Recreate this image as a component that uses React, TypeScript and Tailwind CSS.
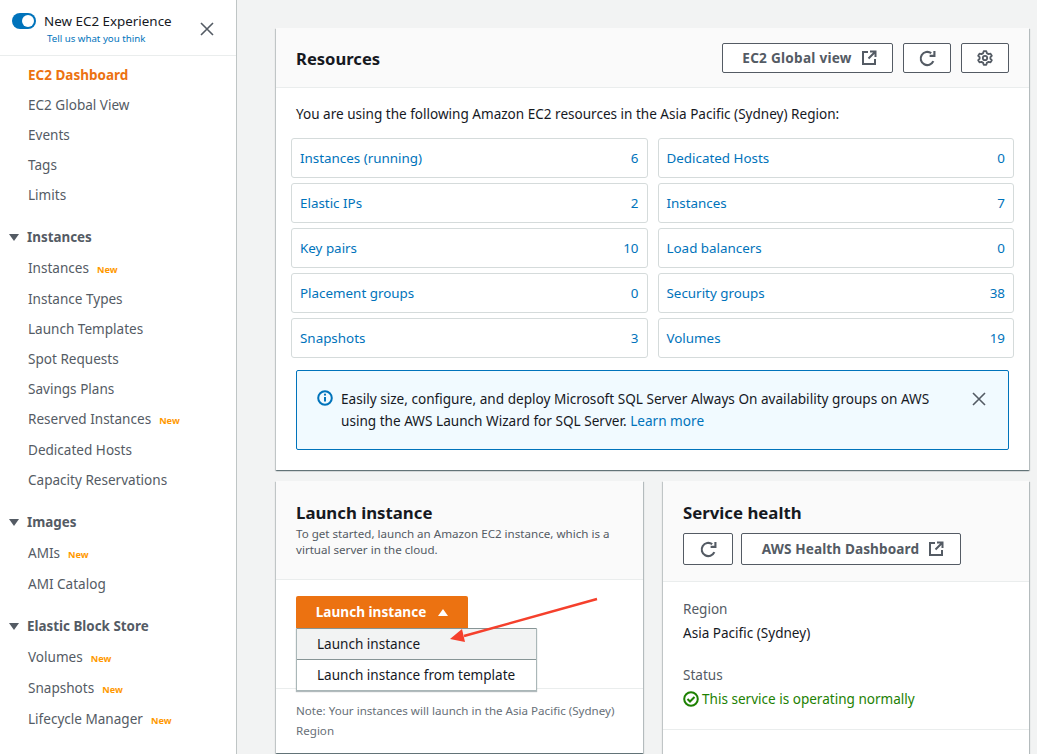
const font = "font-['Noto_Sans',sans-serif]";

type NavItem = { label: string; isNew?: boolean; h?: string };

function ExternalIcon() {
  return (
    <svg width="16" height="16" viewBox="0 0 16 16" fill="none" stroke="currentColor" strokeWidth="2">
      <path d="M7 2H2v12h12V9" />
      <path d="M9 1.5h5.5V7M14.5 1.5L7.5 8.5" />
    </svg>
  );
}

function RefreshIcon() {
  return (
    <svg width="17" height="17" viewBox="0 0 16 16" fill="none" stroke="currentColor" strokeWidth="2">
      <path d="M13.5 10.5A6.2 6.2 0 1 1 11.5 3" />
      <path d="M14.5 1v4.5H10" />
    </svg>
  );
}

function GearIcon() {
  return (
    <svg width="16" height="16" viewBox="0 0 16 16" fill="none" stroke="currentColor" strokeWidth="1.8">
      <circle cx="8" cy="8" r="2.2" />
      <path d="M6.7 1.2h2.6l.5 1.9 1.8 1 1.9-.5 1.3 2.2-1.4 1.4v1.6l1.4 1.4-1.3 2.2-1.9-.5-1.8 1-.5 1.9H6.7l-.5-1.9-1.8-1-1.9.5L1.2 10.2l1.4-1.4V7.2L1.2 5.8l1.3-2.2 1.9.5 1.8-1z" strokeLinejoin="round" />
    </svg>
  );
}

function NavSection({ title, items, className }: { title: string; items: NavItem[]; className: string }) {
  return (
    <div className={className}>
      <div className="h-[31px] flex items-center pl-[9px] text-[#545b64] font-bold text-[13.4px]">
        <span className="w-0 h-0 border-x-[5px] border-x-transparent border-t-[7px] border-t-[#545b64] mr-[8px]"></span>
        {title}
      </div>
      {items.map((item, idx) => (
        <div key={idx} className={`${item.h ?? "h-[30px]"} flex items-center pl-[28px] text-[13.55px] text-[#545b64]`}>
          {item.label}
          {item.isNew && <span className="ml-2 mt-[2px] text-[9.2px] font-bold text-[#ff9900]">New</span>}
        </div>
      ))}
    </div>
  );
}

function Sidebar() {
  return (
    <aside className="w-[237px] shrink-0 h-full bg-white border-r border-[#bfc5c5]">
      <div className="h-[56px] border-b border-[#eaeded] flex items-start pl-[12px] pr-[22px] pt-[11px] justify-between">
        <div className="flex gap-[8px]">
          <div className="mt-[2px] w-[24px] h-[16px] rounded-full bg-[#0073bb] flex items-center justify-end pr-[2px]">
            <div className="w-[12px] h-[12px] rounded-full bg-white"></div>
          </div>
          <div>
            <div className="text-[13.4px] leading-[20px] text-[#16191f]">New EC2 Experience</div>
            <div className="text-[9.7px] leading-[15px] text-[#0073bb] ml-[3px]">Tell us what you think</div>
          </div>
        </div>
        <svg className="mt-[11px]" width="14" height="14" viewBox="0 0 14 14" stroke="#545b64" strokeWidth="1.6">
          <path d="M1 1l12 12M13 1L1 13" />
        </svg>
      </div>
      <div className="pt-[4px]">
        <div className="h-[30px] flex items-center pl-[28px] text-[13.5px] font-bold text-[#ec7211]">EC2 Dashboard</div>
        {["EC2 Global View", "Events", "Tags", "Limits"].map((label) => (
          <div key={label} className="h-[30px] flex items-center pl-[28px] text-[13.55px] text-[#545b64]">
            {label}
          </div>
        ))}
      </div>
      <NavSection
        className="mt-[12px]"
        title="Instances"
        items={[
          { label: "Instances", isNew: true, h: "h-[31px]" },
          { label: "Instance Types" },
          { label: "Launch Templates" },
          { label: "Spot Requests" },
          { label: "Savings Plans" },
          { label: "Reserved Instances", isNew: true, h: "h-[31px]" },
          { label: "Dedicated Hosts" },
          { label: "Capacity Reservations" },
        ]}
      />
      <NavSection
        className="mt-[12px]"
        title="Images"
        items={[
          { label: "AMIs", isNew: true, h: "h-[31px]" },
          { label: "AMI Catalog", h: "h-[31px]" },
        ]}
      />
      <NavSection
        className="mt-[11px]"
        title="Elastic Block Store"
        items={[
          { label: "Volumes", isNew: true, h: "h-[31px]" },
          { label: "Snapshots", isNew: true, h: "h-[31px]" },
          { label: "Lifecycle Manager", isNew: true, h: "h-[31px]" },
        ]}
      />
    </aside>
  );
}

function OutlineButton({ children, className }: { children: React.ReactNode; className?: string }) {
  return (
    <button className={`flex items-center justify-center gap-[9px] rounded-[2px] border border-[#545b64] bg-white text-[#545b64] font-bold text-[13.6px] ${className ?? "h-[30px]"}`}>
      {children}
    </button>
  );
}

function ResourceCell({ label, count }: { label: string; count: number }) {
  return (
    <div className="h-[40px] flex items-center justify-between px-[8px] rounded-[3px] border border-[#d5dbdb] text-[13.4px] text-[#0073bb]">
      <span>{label}</span>
      <span>{count}</span>
    </div>
  );
}

const resources: Array<[string, number]> = [
  ["Instances (running)", 6],
  ["Dedicated Hosts", 0],
  ["Elastic IPs", 2],
  ["Instances", 7],
  ["Key pairs", 10],
  ["Load balancers", 0],
  ["Placement groups", 0],
  ["Security groups", 38],
  ["Snapshots", 3],
  ["Volumes", 19],
];

const cardShadow = "shadow-[0_1px_1px_0_rgba(0,28,36,0.4),1px_1px_1px_0_rgba(0,28,36,0.2),-1px_1px_1px_0_rgba(0,28,36,0.15)]";

export default function App() {
  return (
    <div className={`${font} relative w-[1037px] h-[754px] overflow-hidden flex bg-[#f2f3f3]`}>
      <Sidebar />
      <main className="flex-1 pl-[39px] pr-[8px] pt-[28px] flex flex-col gap-[11px]">
        <section className={`h-[442px] bg-white ${cardShadow}`}>
          <div className="h-[60px] bg-[#fafafa] border-b border-[#eaeded] flex items-center px-[20px] pt-[1px]">
            <h2 className="mt-[2px] text-[16.6px] font-bold text-[#16191f] flex-1">Resources</h2>
            <OutlineButton className="w-[171px] h-[30px]">
              <span className="tracking-[0.25px] ml-[4px]">EC2 Global view</span> <ExternalIcon />
            </OutlineButton>
            <OutlineButton className="w-[48px] h-[30px] ml-[10px]">
              <RefreshIcon />
            </OutlineButton>
            <OutlineButton className="w-[48px] h-[30px] ml-[10px]">
              <GearIcon />
            </OutlineButton>
          </div>
          <div className="pt-[16px]">
            <p className="pl-[20px] text-[13.55px] leading-[20px] text-[#16191f]">
              You are using the following Amazon EC2 resources in the Asia Pacific (Sydney) Region:
            </p>
            <div className="mt-[14px] ml-[15px] w-[723px] grid grid-cols-2 gap-x-[10px] gap-y-[5px]">
              {resources.map(([label, count]) => (
                <ResourceCell key={label} label={label} count={count} />
              ))}
            </div>
            <div className="mt-[12px] ml-[20px] w-[713px] h-[80px] rounded-[2px] border border-[#0073bb] bg-[#f1faff] flex pl-[20px] pr-[22px] pt-[17px]">
              <svg className="mt-[2px] shrink-0" width="16" height="16" viewBox="0 0 16 16" fill="none">
                <circle cx="8" cy="8" r="6.8" stroke="#0073bb" strokeWidth="2" />
                <path d="M8 7v4.5" stroke="#0073bb" strokeWidth="2" />
                <circle cx="8" cy="4.7" r="1.1" fill="#0073bb" />
              </svg>
              <p className="ml-[8px] flex-1 text-[13.6px] leading-[22px] text-[#16191f]">
                Easily size, configure, and deploy Microsoft SQL Server Always On availability groups on AWS using the AWS Launch Wizard for SQL Server. <span className="text-[#0073bb]">Learn more</span>
              </p>
              <svg className="mt-[4px] ml-[34px] shrink-0" width="14" height="14" viewBox="0 0 14 14" stroke="#545b64" strokeWidth="1.6">
                <path d="M1 1l12 12M13 1L1 13" />
              </svg>
            </div>
          </div>
        </section>
        <div className="flex gap-[20px]">
          <section className={`relative w-[367px] h-[272px] bg-white ${cardShadow}`}>
            <div className="h-[99px] bg-[#fafafa] border-b border-[#eaeded] px-[20px] pt-[19px]">
              <h2 className="text-[16.8px] leading-[26px] font-bold text-[#16191f]">Launch instance</h2>
              <p className="text-[11.6px] leading-[16px] text-[#545b64]">
                To get started, launch an Amazon EC2 instance, which is a virtual server in the cloud.
              </p>
            </div>
            <div className="h-[108px] pl-[20px] pt-[16px]">
              <button className="h-[32px] w-[172px] flex items-center justify-center gap-[12px] rounded-t-[2px] bg-[#ec7211] text-white font-bold text-[13.6px]">
                Launch instance
                <span className="w-0 h-0 border-x-[5px] border-x-transparent border-b-[7px] border-b-white"></span>
              </button>
            </div>
            <div className="border-t border-[#eaeded] pl-[20px] pr-[10px] pt-[12px] text-[11.6px] leading-[20px] text-[#687078]">
              Note: Your instances will launch in the Asia Pacific (Sydney) Region
            </div>
            <ul className="absolute left-[20px] top-[147px] w-[241px] bg-white border-x border-b border-[#aab7b8] shadow-[0_1px_1px_rgba(0,28,36,0.3)] text-[13.55px] text-[#16191f]">
              <li className="h-[32px] flex items-center pl-[20px] bg-[#f2f3f3] border-y border-[#879596]">Launch instance</li>
              <li className="h-[30px] flex items-center pl-[20px]">Launch instance from template</li>
            </ul>
          </section>
          <section className={`w-[366px] h-[273px] bg-white ${cardShadow}`}>
            <div className="h-[101px] bg-[#fafafa] border-b border-[#eaeded] pl-[20px] pt-[19px]">
              <h2 className="text-[16.8px] leading-[26px] font-bold text-[#16191f]">Service health</h2>
              <div className="flex gap-[8px] mt-[7px]">
                <OutlineButton className="w-[50px] h-[32px]">
                  <RefreshIcon />
                </OutlineButton>
                <OutlineButton className="w-[220px] h-[32px]">
                  <span className="tracking-[0.1px] ml-[4px]">AWS Health Dashboard</span> <ExternalIcon />
                </OutlineButton>
              </div>
            </div>
            <div className="h-[148px] border-b border-[#eaeded] pl-[20px] pt-[15px] text-[13.55px] leading-[24px]">
              <div className="text-[#545b64]">Region</div>
              <div className="text-[#16191f]">Asia Pacific (Sydney)</div>
              <div className="text-[#545b64] mt-[18px]">Status</div>
              <div className="flex items-center gap-[3px] text-[#1d8102]">
                <svg width="16" height="16" viewBox="0 0 16 16" fill="none" stroke="#1d8102" strokeWidth="2">
                  <circle cx="8" cy="8" r="6.8" />
                  <path d="M4.5 8l2.5 2.5 4.5-4.5" />
                </svg>
                This service is operating normally
              </div>
            </div>
          </section>
        </div>
      </main>
      {/* annotation arrow */}
      <svg className="absolute left-[440px] top-[590px] pointer-events-none" width="170" height="60" viewBox="0 0 170 60" fill="none">
        <path d="M157 9L24 46" stroke="#f5402c" strokeWidth="2.5" />
        <path d="M10 49L22 39L25 52Z" fill="#f5402c" />
      </svg>
    </div>
  );
}
